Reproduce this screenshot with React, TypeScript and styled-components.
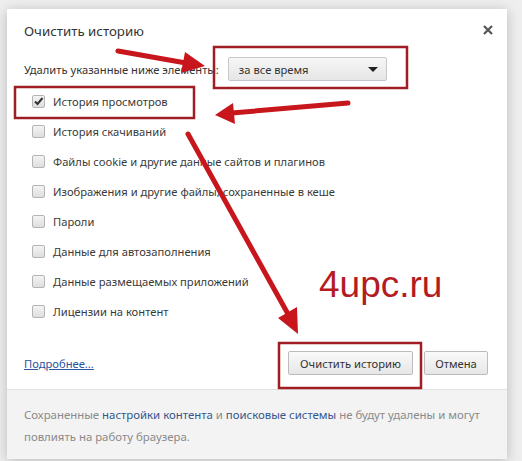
import styled, { createGlobalStyle } from "styled-components";

const GlobalStyle = createGlobalStyle`
  html, body {
    margin: 0;
    padding: 0;
    background: #eeeeee;
    font-family: "Noto Sans", "Open Sans", sans-serif;
  }
`;

const Page = styled.div`
  position: relative;
  width: 522px;
  height: 461px;
  overflow: hidden;
  padding: 9px 0 0 7px;
  box-sizing: border-box;
`;

const Dialog = styled.div`
  width: 500px;
  height: 450px;
  background: #fff;
  box-shadow: 0 2px 12px rgba(0, 0, 0, 0.22);
  display: flex;
  flex-direction: column;
  box-sizing: border-box;
`;

const Main = styled.div`
  flex: 1;
  padding: 12px 12px 0 17px;
  display: flex;
  flex-direction: column;
`;

const Header = styled.div`
  display: flex;
  justify-content: space-between;
  align-items: flex-start;
`;

const Title = styled.h1`
  margin: 0;
  font-size: 13.3px;
  font-weight: normal;
  line-height: 20px;
  color: #333;
`;

const Close = styled.button`
  all: unset;
  margin-top: 2px;
  width: 14px;
  height: 14px;
  display: flex;
  align-items: center;
  justify-content: center;
  cursor: pointer;
`;

const PeriodRow = styled.div`
  display: flex;
  align-items: center;
  gap: 9px;
  margin-top: 16px;
  height: 24px;
  font-size: 11.2px;
  color: #333;
`;

const Select = styled.div`
  width: 159px;
  height: 24px;
  box-sizing: border-box;
  border: 1px solid #c8c8c8;
  border-radius: 2px;
  background: linear-gradient(#f6f6f6, #e6e6e6);
  display: flex;
  align-items: center;
  justify-content: space-between;
  padding: 0 8px 0 10px;
  color: #333;
`;

const Caret = styled.span`
  width: 0;
  height: 0;
  border-left: 5px solid transparent;
  border-right: 5px solid transparent;
  border-top: 5px solid #222;
`;

const List = styled.div`
  margin-top: 5px;
  display: flex;
  flex-direction: column;
`;

const Item = styled.label`
  height: 30px;
  display: flex;
  align-items: center;
  gap: 8px;
  padding-left: 8px;
  font-size: 11.2px;
  color: #3a3a3a;
`;

const Box = styled.span<{ $checked?: boolean }>`
  width: 13px;
  height: 13px;
  box-sizing: border-box;
  border: 1px solid #b4b4b4;
  border-radius: 2px;
  background: linear-gradient(#f4f4f4, #dedede);
  display: flex;
  align-items: center;
  justify-content: center;
`;

const Actions = styled.div`
  margin-top: 25px;
  padding-right: 7px;
  display: flex;
  align-items: center;
  gap: 11px;
`;

const MoreLink = styled.a`
  flex: 1;
  font-size: 11.2px;
  color: #2a55a0;
  text-decoration: underline;
`;

const Button = styled.button<{ $wide?: boolean }>`
  height: 24px;
  width: ${(p) => (p.$wide ? "125px" : "64px")};
  padding: 0;
  border: 1px solid #bcbcbc;
  border-radius: 2px;
  background: linear-gradient(#fafafa, #e6e6e6);
  font-family: inherit;
  font-size: 11.2px;
  color: #333;
`;

const Footer = styled.div`
  height: 70px;
  box-sizing: border-box;
  border-top: 1px solid #e2e2e2;
  background: #f3f3f3;
  padding: 14px 20px 0 17px;
  font-size: 11.4px;
  line-height: 22px;
  color: #8a8a8a;
`;

const FooterLink = styled.span`
  color: #35568c;
`;

const Annotations = styled.svg`
  position: absolute;
  left: 0;
  top: 0;
  pointer-events: none;
`;

const Watermark = styled.span`
  position: absolute;
  left: 319px;
  top: 264px;
  font-family: "Liberation Sans", Arial, sans-serif;
  font-size: 37px;
  color: #b31c22;
`;

const items = [
  "История просмотров",
  "История скачиваний",
  "Файлы cookie и другие данные сайтов и плагинов",
  "Изображения и другие файлы, сохраненные в кеше",
  "Пароли",
  "Данные для автозаполнения",
  "Данные размещаемых приложений",
  "Лицензии на контент",
];

export default function App() {
  return (
    <>
      <GlobalStyle />
      <Page>
        <Dialog>
          <Main>
            <Header>
              <Title>Очистить историю</Title>
              <Close aria-label="Закрыть">
                <svg width="10" height="10" viewBox="0 0 10 10">
                  <path d="M1 1L9 9M9 1L1 9" stroke="#555" strokeWidth="2.2" />
                </svg>
              </Close>
            </Header>

            <PeriodRow>
              Удалить указанные ниже элементы:
              <Select>
                за все время
                <Caret />
              </Select>
            </PeriodRow>

            <List>
              {items.map((label, i) => (
                <Item key={label}>
                  <Box $checked={i === 0}>
                    {i === 0 && (
                      <svg width="11" height="11" viewBox="0 0 11 11">
                        <path d="M2 5.5L4.5 8L9.5 2" fill="none" stroke="#333" strokeWidth="2" />
                      </svg>
                    )}
                  </Box>
                  {label}
                </Item>
              ))}
            </List>

            <Actions>
              <MoreLink>Подробнее...</MoreLink>
              <Button $wide>Очистить историю</Button>
              <Button>Отмена</Button>
            </Actions>
          </Main>

          <Footer>
            Сохраненные <FooterLink>настройки контента</FooterLink> и{" "}
            <FooterLink>поисковые системы</FooterLink> не будут удалены и могут
            <br />
            повлиять на работу браузера.
          </Footer>
        </Dialog>

        <Annotations width="522" height="461" viewBox="0 0 522 461">
          <g fill="none" stroke="#a11d24" strokeWidth="2.5">
            <rect x="214" y="47" width="193" height="41" />
            <rect x="15" y="87" width="179" height="31" />
            <rect x="279" y="343" width="142" height="45" />
          </g>
          <g stroke="#c8161d" strokeWidth="5" strokeLinecap="round" fill="#c8161d">
            <line x1="118" y1="51" x2="186" y2="63" />
            <line x1="348" y1="103" x2="232" y2="113" />
            <line x1="188" y1="134" x2="288" y2="314" />
          </g>
          <g fill="#c8161d">
            <polygon points="205,66 181,73 185,52" />
            <polygon points="215,115 235,124 233,103" />
            <polygon points="298,334 278,318 297,307" />
          </g>
        </Annotations>
        <Watermark>4upc.ru</Watermark>
      </Page>
    </>
  );
}
